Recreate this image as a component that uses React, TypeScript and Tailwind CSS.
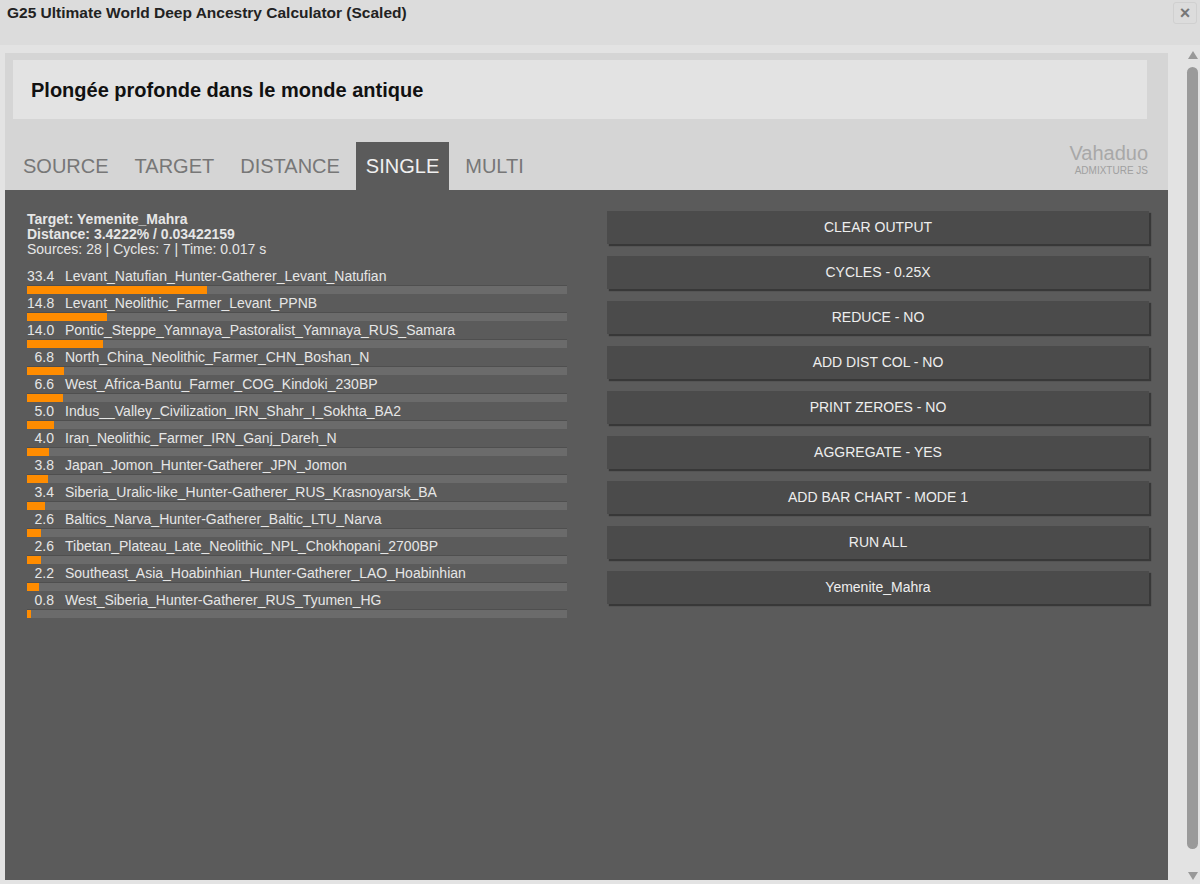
const rows: [number, string][] = [
  [33.4, "Levant_Natufian_Hunter-Gatherer_Levant_Natufian"],
  [14.8, "Levant_Neolithic_Farmer_Levant_PPNB"],
  [14.0, "Pontic_Steppe_Yamnaya_Pastoralist_Yamnaya_RUS_Samara"],
  [6.8, "North_China_Neolithic_Farmer_CHN_Boshan_N"],
  [6.6, "West_Africa-Bantu_Farmer_COG_Kindoki_230BP"],
  [5.0, "Indus__Valley_Civilization_IRN_Shahr_I_Sokhta_BA2"],
  [4.0, "Iran_Neolithic_Farmer_IRN_Ganj_Dareh_N"],
  [3.8, "Japan_Jomon_Hunter-Gatherer_JPN_Jomon"],
  [3.4, "Siberia_Uralic-like_Hunter-Gatherer_RUS_Krasnoyarsk_BA"],
  [2.6, "Baltics_Narva_Hunter-Gatherer_Baltic_LTU_Narva"],
  [2.6, "Tibetan_Plateau_Late_Neolithic_NPL_Chokhopani_2700BP"],
  [2.2, "Southeast_Asia_Hoabinhian_Hunter-Gatherer_LAO_Hoabinhian"],
  [0.8, "West_Siberia_Hunter-Gatherer_RUS_Tyumen_HG"],
];

const buttons = [
  "CLEAR OUTPUT",
  "CYCLES - 0.25X",
  "REDUCE - NO",
  "ADD DIST COL - NO",
  "PRINT ZEROES - NO",
  "AGGREGATE - YES",
  "ADD BAR CHART - MODE 1",
  "RUN ALL",
  "Yemenite_Mahra",
];

const tabs = ["SOURCE", "TARGET", "DISTANCE", "SINGLE", "MULTI"];

export default function App() {
  return (
    <div className="flex h-[884px] w-[1200px] flex-col overflow-hidden bg-[#dcdcdc] font-['Liberation_Sans',Arial,sans-serif]">
      {/* dialog title */}
      <div className="relative h-[45px] shrink-0 bg-[#dcdcdc]">
        <div className="pl-[7px] pt-[3px] text-[15.5px] font-bold leading-[20px] text-[#222]">
          G25 Ultimate World Deep Ancestry Calculator (Scaled)
        </div>
        <div className="absolute right-[3px] top-[2px] flex h-[22px] w-[24px] items-center justify-center rounded-[3px] border border-[#d0d0d0] text-[18px] font-bold leading-none text-[#777]">
          ×
        </div>
      </div>

      <div className="flex min-h-0 flex-1 bg-[#e3e3e3]">
        <div className="flex min-h-0 flex-1 pb-[4px] pl-[5px] pt-[8px]">
          <div className="flex w-[1163px] flex-col bg-[#d5d5d5]">
            <div className="ml-[8px] mr-[21px] mt-[7px] flex h-[59px] shrink-0 items-center bg-[#e3e3e3] pl-[18px] text-[20px] font-bold text-[#111]">
              Plongée profonde dans le monde antique
            </div>

            <div className="mt-[23px] flex h-[48px] shrink-0 pl-[8px] pr-[20px]">
              <div className="flex gap-[6px]">
                {tabs.map((t) => (
                  <div
                    key={t}
                    className={
                      t === "SINGLE"
                        ? "flex items-center bg-[#5b5b5b] px-[10px] text-[20px] text-[#f0f0f0]"
                        : "flex items-center px-[10px] text-[20px] text-[#777]"
                    }
                  >
                    {t}
                  </div>
                ))}
              </div>
              <div className="ml-auto flex flex-col items-end pt-[1px]">
                <span className="text-[20px] leading-[20px] text-[#a8a8a8]">Vahaduo</span>
                <span className="mt-[2px] text-[10px] leading-[11px] text-[#a0a0a0]">ADMIXTURE JS</span>
              </div>
            </div>

            <div className="flex min-h-0 flex-1 bg-[#5b5b5b] pt-[21px]">
              <div className="ml-[22px] w-[540px] pt-[1px] text-[14px] text-[#e6e6e6]">
                <div className="leading-[15px]">
                  <div className="font-bold">Target: Yemenite_Mahra</div>
                  <div className="font-bold">Distance: 3.4222% / 0.03422159</div>
                  <div>Sources: 28 | Cycles: 7 | Time: 0.017 s</div>
                </div>
                <div className="mt-[10px]">
                  {rows.map(([v, name], i) => (
                    <div key={i}>
                      <div className="flex h-[18px] items-center leading-[18px]">
                        <span className="w-[27px] text-right">{v.toFixed(1)}</span>
                        <span className="ml-[11px] whitespace-nowrap">{name}</span>
                      </div>
                      <div className="h-[9px] border-t border-[#4f4f4f] bg-[#6b6b6b]">
                        <div className="h-full bg-[#ff8c00]" style={{ width: `${(v / 100) * 540}px` }} />
                      </div>
                    </div>
                  ))}
                </div>
              </div>

              <div className="ml-[40px] flex w-[542px] flex-col gap-[12px]">
                {buttons.map((b) => (
                  <div
                    key={b}
                    className="flex h-[33px] items-center justify-center bg-[#4b4b4b] text-[14px] text-[#eeeeee] shadow-[2px_2px_1px_#383838]"
                  >
                    {b}
                  </div>
                ))}
              </div>
            </div>
          </div>
        </div>

        {/* scrollbar */}
        <div className="flex w-[32px] flex-col items-end pb-[4px] pr-[2px] pt-[6px]">
          <div className="h-0 w-0 border-x-[5px] border-b-[8px] border-x-transparent border-b-[#999]" />
          <div className="mt-[8px] h-[782px] w-[11px] rounded-full bg-[#9a9a9a]" />
          <div className="mt-auto h-0 w-0 border-x-[5px] border-t-[8px] border-x-transparent border-t-[#999]" />
        </div>
      </div>
    </div>
  );
}
